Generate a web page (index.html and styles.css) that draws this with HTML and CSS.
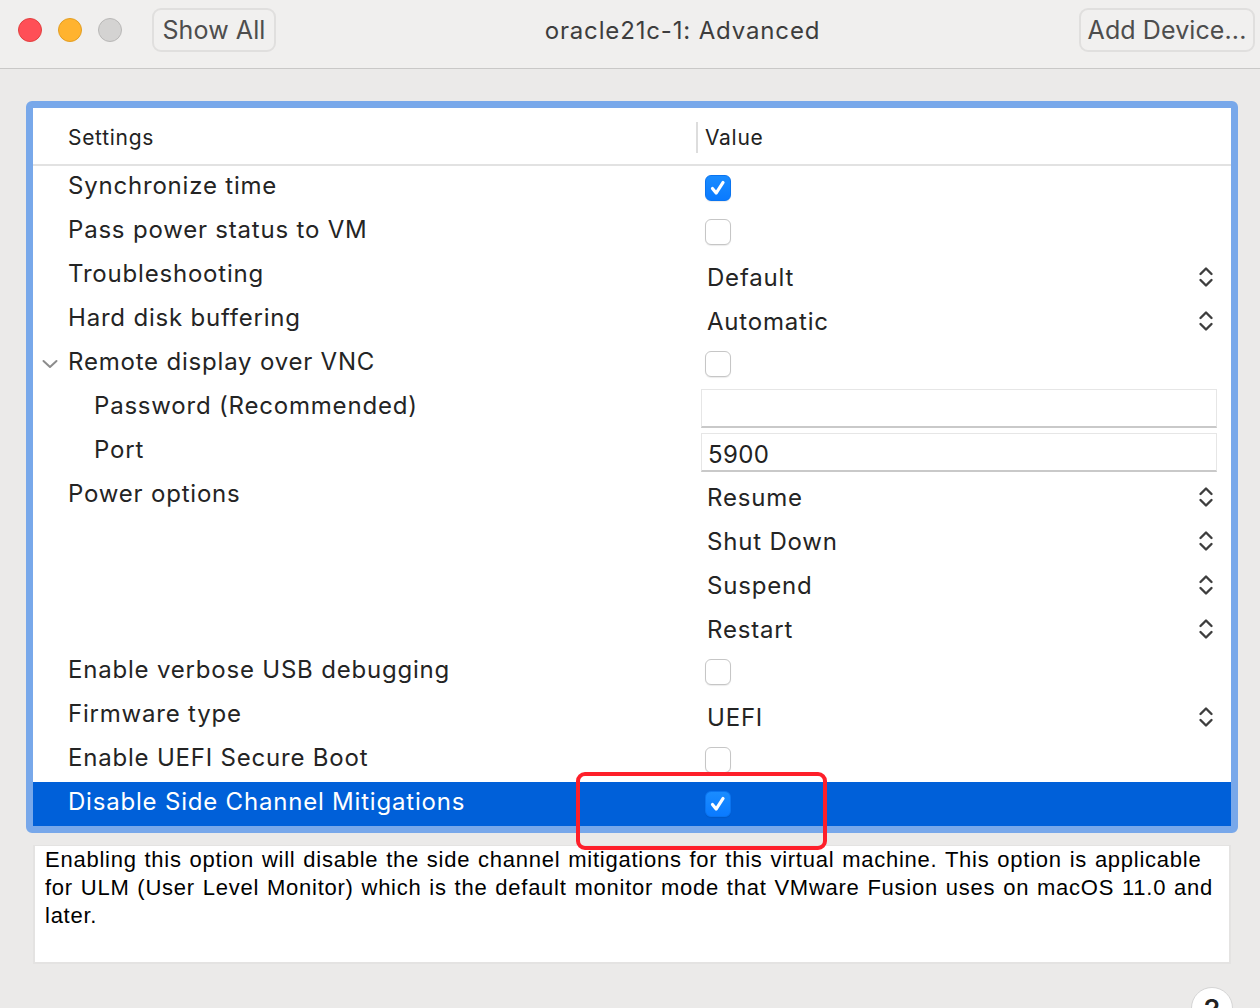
FILE: index.html
```html
<!DOCTYPE html>
<html>
<head>
<meta charset="utf-8">
<link rel="stylesheet" href="styles.css">
</head>
<body>
<div class="window">
  <header class="titlebar">
    <div class="lights">
      <span class="light red"></span>
      <span class="light yellow"></span>
      <span class="light gray"></span>
    </div>
    <button class="tb-btn show-all">Show All</button>
    <div class="title">oracle21c-1: Advanced</div>
    <button class="tb-btn add-device">Add Device...</button>
  </header>

  <main class="content">
    <div class="table">
      <div class="thead">
        <div class="th th-settings">Settings</div>
        <div class="th th-value">Value</div>
      </div>

      <div class="row">
        <div class="label">Synchronize time</div>
        <div class="value"><span class="cb checked"><svg viewBox="0 0 26 26"><path d="M7 13.5 L11 18.5 L18.5 7"/></svg></span></div>
      </div>
      <div class="row">
        <div class="label">Pass power status to VM</div>
        <div class="value"><span class="cb"></span></div>
      </div>
      <div class="row">
        <div class="label">Troubleshooting</div>
        <div class="value select"><span>Default</span><svg class="updown" viewBox="0 0 16 24"><path d="M2.5 9 L8 3.5 L13.5 9 M2.5 15 L8 20.5 L13.5 15"/></svg></div>
      </div>
      <div class="row">
        <div class="label">Hard disk buffering</div>
        <div class="value select"><span>Automatic</span><svg class="updown" viewBox="0 0 16 24"><path d="M2.5 9 L8 3.5 L13.5 9 M2.5 15 L8 20.5 L13.5 15"/></svg></div>
      </div>
      <div class="row">
        <div class="label with-disclosure"><svg class="disclosure" viewBox="0 0 16 10"><path d="M1.5 2 L8 8 L14.5 2"/></svg>Remote display over VNC</div>
        <div class="value"><span class="cb"></span></div>
      </div>
      <div class="row">
        <div class="label sub">Password (Recommended)</div>
        <div class="value"><div class="field"></div></div>
      </div>
      <div class="row">
        <div class="label sub">Port</div>
        <div class="value"><div class="field">5900</div></div>
      </div>
      <div class="row">
        <div class="label">Power options</div>
        <div class="value select"><span>Resume</span><svg class="updown" viewBox="0 0 16 24"><path d="M2.5 9 L8 3.5 L13.5 9 M2.5 15 L8 20.5 L13.5 15"/></svg></div>
      </div>
      <div class="row">
        <div class="label"></div>
        <div class="value select"><span>Shut Down</span><svg class="updown" viewBox="0 0 16 24"><path d="M2.5 9 L8 3.5 L13.5 9 M2.5 15 L8 20.5 L13.5 15"/></svg></div>
      </div>
      <div class="row">
        <div class="label"></div>
        <div class="value select"><span>Suspend</span><svg class="updown" viewBox="0 0 16 24"><path d="M2.5 9 L8 3.5 L13.5 9 M2.5 15 L8 20.5 L13.5 15"/></svg></div>
      </div>
      <div class="row">
        <div class="label"></div>
        <div class="value select"><span>Restart</span><svg class="updown" viewBox="0 0 16 24"><path d="M2.5 9 L8 3.5 L13.5 9 M2.5 15 L8 20.5 L13.5 15"/></svg></div>
      </div>
      <div class="row">
        <div class="label">Enable verbose USB debugging</div>
        <div class="value"><span class="cb"></span></div>
      </div>
      <div class="row">
        <div class="label">Firmware type</div>
        <div class="value select"><span>UEFI</span><svg class="updown" viewBox="0 0 16 24"><path d="M2.5 9 L8 3.5 L13.5 9 M2.5 15 L8 20.5 L13.5 15"/></svg></div>
      </div>
      <div class="row">
        <div class="label">Enable UEFI Secure Boot</div>
        <div class="value"><span class="cb"></span></div>
      </div>
      <div class="row selected">
        <div class="label">Disable Side Channel Mitigations</div>
        <div class="value"><span class="cb checked"><svg viewBox="0 0 26 26"><path d="M7 13.5 L11 18.5 L18.5 7"/></svg></span></div>
      </div>
    </div>

    <div class="desc">Enabling this option will disable the side channel mitigations for this virtual machine. This option is applicable for ULM (User Level Monitor) which is the default monitor mode that VMware Fusion uses on macOS 11.0 and later.</div>

    <div class="help-row"><button class="help">?</button></div>

    <div class="annotation"></div>
  </main>
</div>
</body>
</html>
```

FILE: styles.css
```css
* { box-sizing: border-box; }

html, body {
  margin: 0;
  padding: 0;
  width: 1260px;
  height: 1008px;
  overflow: hidden;
}

body {
  font-family: "Inter", "Noto Sans", "Liberation Sans", sans-serif;
  background: #ebeae9;
  color: #222;
}

.window {
  width: 1260px;
  height: 1008px;
  display: flex;
  flex-direction: column;
}

/* ---------- Title bar ---------- */
.titlebar {
  height: 69px;
  flex: none;
  background: #f0efee;
  border-bottom: 1px solid #c9c8c7;
  display: flex;
  align-items: flex-start;
  position: relative;
}

.lights {
  display: flex;
  gap: 16px;
  padding: 18px 0 0 18px;
}

.light {
  width: 24px;
  height: 24px;
  border-radius: 50%;
  display: block;
}
.light.red { background: #ff4f57; border: 1px solid #e2403f; }
.light.yellow { background: #ffb32f; border: 1px solid #e39e22; }
.light.gray { background: #d4d3d2; border: 1px solid #b9b8b7; }

.tb-btn {
  font-family: inherit;
  font-size: 25px;
  color: #4d4d4d;
  background: #f1f0ef;
  border: 2px solid #e0dfde;
  border-radius: 9px;
  height: 44px;
  margin-top: 8px;
  padding: 0 8px;
  line-height: 38px;
  letter-spacing: 0.1px;
}

.show-all {
  margin-left: 30px;
  width: 124px;
}

.title {
  flex: 1;
  text-align: center;
  font-size: 24px;
  color: #3d3d3d;
  padding-top: 16px;
  padding-left: 10px;
  letter-spacing: 0.85px;
}

.add-device {
  margin-right: 5px;
  width: 176px;
  padding: 0 6px;
}

/* ---------- Content ---------- */
.content {
  flex: 1;
  position: relative;
  padding: 32px 22px 0 26px;
}

.table {
  width: 1212px;
  border: 7px solid #78a8ea;
  border-radius: 6px;
  background: #fff;
  overflow: hidden;
}

.thead {
  display: grid;
  grid-template-columns: 663px 1fr;
  height: 58px;
  border-bottom: 2px solid #e2e2e2;
  align-items: center;
  font-size: 21px;
  letter-spacing: 0.7px;
  color: #222;
}

.th-settings {
  padding-left: 35px;
  padding-top: 2px;
}

.th-value {
  border-left: 2px solid #dddddd;
  height: 31px;
  line-height: 31px;
  padding-left: 7px;
  margin-top: 2px;
}

.row {
  display: grid;
  grid-template-columns: 663px 1fr;
  height: 44px;
  align-items: center;
  font-size: 24px;
  letter-spacing: 0.8px;
  color: #242424;
}

.label {
  padding-left: 35px;
  padding-bottom: 6px;
  white-space: nowrap;
  display: flex;
  align-items: center;
}

.label.sub { padding-left: 61px; }

.label.with-disclosure { padding-left: 9px; }

.disclosure {
  width: 16px;
  height: 10px;
  margin-right: 10px;
  margin-top: 6px;
  fill: none;
  stroke: #8c8c8c;
  stroke-width: 2;
  stroke-linecap: round;
  stroke-linejoin: round;
}

.value {
  display: flex;
  align-items: center;
  padding-left: 9px;
  height: 44px;
}

.value.select {
  justify-content: space-between;
  padding-left: 11px;
  padding-right: 17px;
  padding-top: 2px;
}

.updown {
  width: 16px;
  height: 24px;
  fill: none;
  stroke: #3e3e3e;
  stroke-width: 2.4;
  stroke-linecap: round;
  stroke-linejoin: round;
}

.cb {
  width: 26px;
  height: 26px;
  border-radius: 6px;
  background: #fff;
  border: 1px solid #c6c6c6;
  box-shadow: 0 1px 1px rgba(0,0,0,0.08);
  display: block;
}

.cb.checked {
  background: linear-gradient(#1a8cff, #0a7aff);
  border: 1px solid #0a74f0;
}

.cb svg {
  width: 24px;
  height: 24px;
  display: block;
  fill: none;
  stroke: #fff;
  stroke-width: 3.4;
  stroke-linecap: round;
  stroke-linejoin: round;
}

.field {
  margin-left: -4px;
  width: 516px;
  height: 39px;
  border: 1px solid #e6e6e6;
  border-bottom: 2px solid #c9c9c9;
  background: #fff;
  font-size: 24px;
  letter-spacing: 0.4px;
  padding: 6px 0 0 6px;
  color: #222;
}

.row.selected {
  background: #0060d9;
  color: #fff;
}

/* ---------- Description ---------- */
.desc {
  margin-top: 12px;
  margin-left: 7px;
  width: 1198px;
  height: 119px;
  background: #fff;
  border: 2px solid #e4e3e2;
  border-top-width: 1px;
  font-family: "Liberation Sans", Arial, sans-serif;
  font-size: 22px;
  line-height: 28px;
  color: #000;
  padding: 0 2px 0 10px;
  letter-spacing: 0.75px;
  word-spacing: 1px;
}

.help-row {
  display: flex;
  justify-content: flex-end;
  padding-right: 5px;
  margin-top: 23px;
}

.help {
  width: 42px;
  height: 42px;
  border-radius: 50%;
  background: #fff;
  border: 1px solid #d5d5d5;
  font-family: inherit;
  font-size: 30px;
  font-weight: 500;
  color: #222;
  padding: 0;
  line-height: 44px;
  text-align: center;
}

/* annotation overlay */
.annotation {
  position: absolute;
  left: 576px;
  top: 703px;
  width: 251px;
  height: 78px;
  border: 4px solid #fe1f2a;
  border-radius: 9px;
  pointer-events: none;
}
```
